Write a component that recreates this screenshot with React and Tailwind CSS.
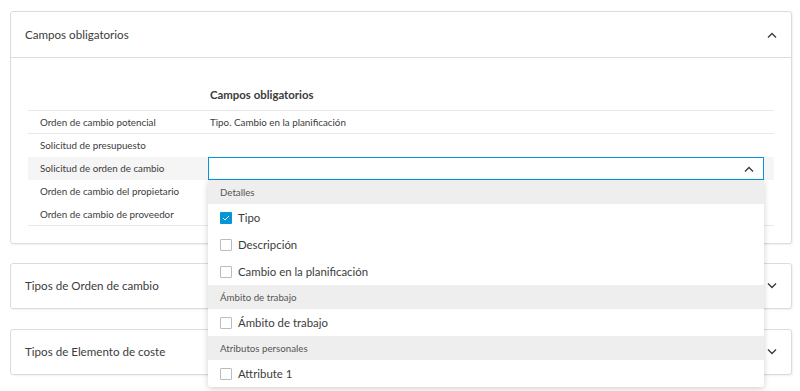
import React from 'react';

const font = { fontFamily: 'Lato, "Open Sans", sans-serif' };

const Chevron = ({ up = false, className = '' }) => (
  <svg width="10" height="6" viewBox="0 0 10 6" className={className}>
    <path
      d={up ? 'M1 5.5 L5 1.5 L9 5.5' : 'M1 0.5 L5 4.5 L9 0.5'}
      fill="none"
      stroke="#3c3c3c"
      strokeWidth="1.4"
    />
  </svg>
);

const Checkbox = ({ checked }) =>
  checked ? (
    <span className="w-[12px] h-[12px] rounded-[1px] bg-[#0696d7] flex items-center justify-center">
      <svg width="8" height="6" viewBox="0 0 8 6">
        <path d="M1 3 L3 5 L7 1" fill="none" stroke="#fff" strokeWidth="1" />
      </svg>
    </span>
  ) : (
    <span className="w-[12px] h-[12px] rounded-[1px] border border-[#bcbcbc] bg-white" />
  );

const rows = [
  { label: 'Orden de cambio potencial', value: 'Tipo. Cambio en la planificación', border: true },
  { label: 'Solicitud de presupuesto' },
  { label: 'Solicitud de orden de cambio', select: true },
  { label: 'Orden de cambio del propietario' },
  { label: 'Orden de cambio de proveedor', border: true },
];

const groups = [
  { title: 'Detalles', items: [{ name: 'Tipo', checked: true }, { name: 'Descripción' }, { name: 'Cambio en la planificación' }] },
  { title: 'Ámbito de trabajo', items: [{ name: 'Ámbito de trabajo' }] },
  { title: 'Atributos personales', items: [{ name: 'Attribute 1' }] },
];

const Dropdown = () => (
  <div className="absolute left-0 top-full w-full z-10 bg-white rounded-b-[3px] shadow-[0_2px_6px_rgba(0,0,0,0.18)]">
    {groups.map((g) => (
      <div key={g.title}>
        <div className="h-[24px] bg-[#eeeeee] flex items-center pl-[12px] text-[9.7px] text-[#555]">{g.title}</div>
        {g.items.map((it) => (
          <div key={it.name} className="h-[27px] flex items-center pl-[12px] gap-[6px] text-[11.4px] text-[#3c3c3c]">
            <Checkbox checked={it.checked} />
            <span>{it.name}</span>
          </div>
        ))}
      </div>
    ))}
  </div>
);

const CollapsedCard = ({ title, className = '' }) => (
  <div className={`border border-[#dcdcdc] rounded-[3px] bg-white shadow-[1px_1px_2px_rgba(0,0,0,0.06)] ${className}`}>
    <div className="h-[44px] flex items-center justify-between pl-[14px] pr-[14px]">
      <span className="text-[11.6px] text-[#3c3c3c]">{title}</span>
      <Chevron />
    </div>
  </div>
);

export default function App() {
  return (
    <div className="min-h-[391px] bg-white pt-[11px] pl-[10px] pr-[8px]" style={font}>
      {/* Campos obligatorios */}
      <div className="relative border border-[#dcdcdc] rounded-[3px] bg-white shadow-[1px_1px_2px_rgba(0,0,0,0.06)]">
        <div className="h-[46px] flex items-center justify-between pl-[14px] pr-[14px] border-b border-[#dcdcdc]">
          <span className="text-[11.6px] text-[#3c3c3c]">Campos obligatorios</span>
          <Chevron up />
        </div>
        <div className="pt-[22px] pb-[17px] px-[17px]">
          <div className="h-[31px] flex items-center border-b border-[#e8e8e8]">
            <div className="w-[180px]" />
            <div className="pl-[2px] text-[11.4px] font-bold text-[#3c3c3c]">Campos obligatorios</div>
          </div>
          {rows.map((r) => (
            <div
              key={r.label}
              className={`h-[23px] flex items-center text-[9.8px] text-[#3c3c3c] ${r.border ? 'border-b border-[#e8e8e8]' : ''} ${r.select ? 'bg-[#f5f5f5]' : ''}`}
            >
              <div className="w-[180px] pl-[12px]">{r.label}</div>
              <div className="flex-1 pr-[10px] h-full flex items-center">
                {r.value && <span className="pl-[2px]">{r.value}</span>}
                {r.select && (
                  <div className="relative w-full h-full">
                    <div className="h-full bg-white border border-[#0696d7] flex items-center justify-end pr-[9px]">
                      <Chevron up />
                    </div>
                    <Dropdown />
                  </div>
                )}
              </div>
            </div>
          ))}
        </div>
      </div>

      <CollapsedCard title="Tipos de Orden de cambio" className="mt-[19px]" />
      <CollapsedCard title="Tipos de Elemento de coste" className="mt-[20px]" />
    </div>
  );
}
